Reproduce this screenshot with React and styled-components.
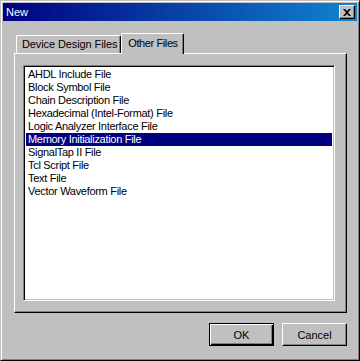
import React, { useState } from "react";
import styled, { createGlobalStyle } from "styled-components";

const GlobalStyle = createGlobalStyle`
  html, body {
    margin: 0;
    padding: 0;
    background: #c0c0c0;
  }
  * {
    box-sizing: border-box;
  }
`;

const Window = styled.div`
  width: 360px;
  height: 361px;
  background: #c0c0c0;
  border: 1px solid;
  border-color: #c0c0c0 #000 #000 #c0c0c0;
  box-shadow: inset 1px 1px #fff, inset -1px -1px #808080;
  padding: 2px;
  display: flex;
  flex-direction: column;
  font-family: "Liberation Sans", Arial, sans-serif;
  font-size: 11px;
  color: #000;
`;

const TitleBar = styled.div`
  height: 18px;
  display: flex;
  align-items: center;
  justify-content: space-between;
  padding: 0 2px 0 3px;
  background: linear-gradient(to right, #000080, #1084d0);
  color: #fff;
  font-size: 11px;
`;

const CloseButton = styled.div`
  width: 16px;
  height: 14px;
  display: flex;
  align-items: center;
  justify-content: center;
  background: #c0c0c0;
  border: 1px solid;
  border-color: #fff #000 #000 #fff;
  box-shadow: inset -1px -1px #808080;
`;

const Body = styled.div`
  flex: 1;
  display: flex;
  flex-direction: column;
  padding: 12px 10px 0 11px;
`;

const TabStrip = styled.div`
  height: 20px;
  display: flex;
  align-items: flex-end;
  padding-left: 2px;
  position: relative;
  z-index: 1;
`;

const Tab = styled.div`
  height: ${(p) => (p.$active ? "21px" : "18px")};
  margin-bottom: ${(p) => (p.$active ? "-1px" : "0")};
  padding: ${(p) => (p.$active ? "3px 5px 0 6px" : "2px 3px 0 5px")};
  background: #c0c0c0;
  border-left: 1px solid #fff;
  border-top: 1px solid #fff;
  border-right: 1px solid #000;
  border-radius: 2px 2px 0 0;
  box-shadow: inset -1px 0 #808080;
  white-space: nowrap;
  letter-spacing: ${(p) => (p.$active ? "-0.4px" : "-0.1px")};
  cursor: default;
`;

const Panel = styled.div`
  width: 333px;
  height: 260px;
  border: 1px solid;
  border-color: #fff #000 #000 #fff;
  box-shadow: inset -1px -1px #808080;
  padding: 11px 0 0 8px;
`;

const ListBox = styled.div`
  width: 312px;
  height: 236px;
  background: #fff;
  border: 1px solid;
  border-color: #808080 #fff #fff #808080;
  box-shadow: inset 1px 1px #000, inset -1px -1px #c0c0c0;
  padding: 2px 2px;
  display: flex;
  flex-direction: column;
`;

const Item = styled.div`
  height: 13px;
  line-height: 13px;
  padding-left: 2px;
  white-space: nowrap;
  letter-spacing: -0.3px;
  background: ${(p) => (p.$selected ? "#000080" : "transparent")};
  color: ${(p) => (p.$selected ? "#fff" : "#000")};
`;

const ButtonRow = styled.div`
  display: flex;
  justify-content: flex-end;
  gap: 8px;
  padding-top: 10px;
`;

const Button = styled.div`
  width: 65px;
  height: 23px;
  display: flex;
  align-items: center;
  justify-content: center;
  background: #c0c0c0;
  border: 1px solid;
  border-color: ${(p) => (p.$default ? "#000" : "#fff #000 #000 #fff")};
  box-shadow: ${(p) =>
    p.$default
      ? "inset 1px 1px #fff, inset -1px -1px #000, inset -2px -2px #808080"
      : "inset -1px -1px #808080"};
`;

const files = [
  "AHDL Include File",
  "Block Symbol File",
  "Chain Description File",
  "Hexadecimal (Intel-Format) File",
  "Logic Analyzer Interface File",
  "Memory Initialization File",
  "SignalTap II File",
  "Tcl Script File",
  "Text File",
  "Vector Waveform File",
];

export default function App() {
  const [selected, setSelected] = useState(5);
  const [tab, setTab] = useState(1);

  return (
    <>
      <GlobalStyle />
      <Window>
        <TitleBar>
          <span>New</span>
          <CloseButton>
            <svg width="8" height="7" viewBox="0 0 8 7">
              <path d="M0 0h2l2 2 2-2h2L5 3.5 8 7H6L4 5 2 7H0l3-3.5z" fill="#000" />
            </svg>
          </CloseButton>
        </TitleBar>
        <Body>
          <TabStrip>
            <Tab $active={tab === 0} onClick={() => setTab(0)}>
              Device Design Files
            </Tab>
            <Tab $active={tab === 1} onClick={() => setTab(1)}>
              Other Files
            </Tab>
          </TabStrip>
          <Panel>
            <ListBox>
              {files.map((f, i) => (
                <Item key={f} $selected={i === selected} onClick={() => setSelected(i)}>
                  {f}
                </Item>
              ))}
            </ListBox>
          </Panel>
          <ButtonRow>
            <Button $default>OK</Button>
            <Button>Cancel</Button>
          </ButtonRow>
        </Body>
      </Window>
    </>
  );
}
